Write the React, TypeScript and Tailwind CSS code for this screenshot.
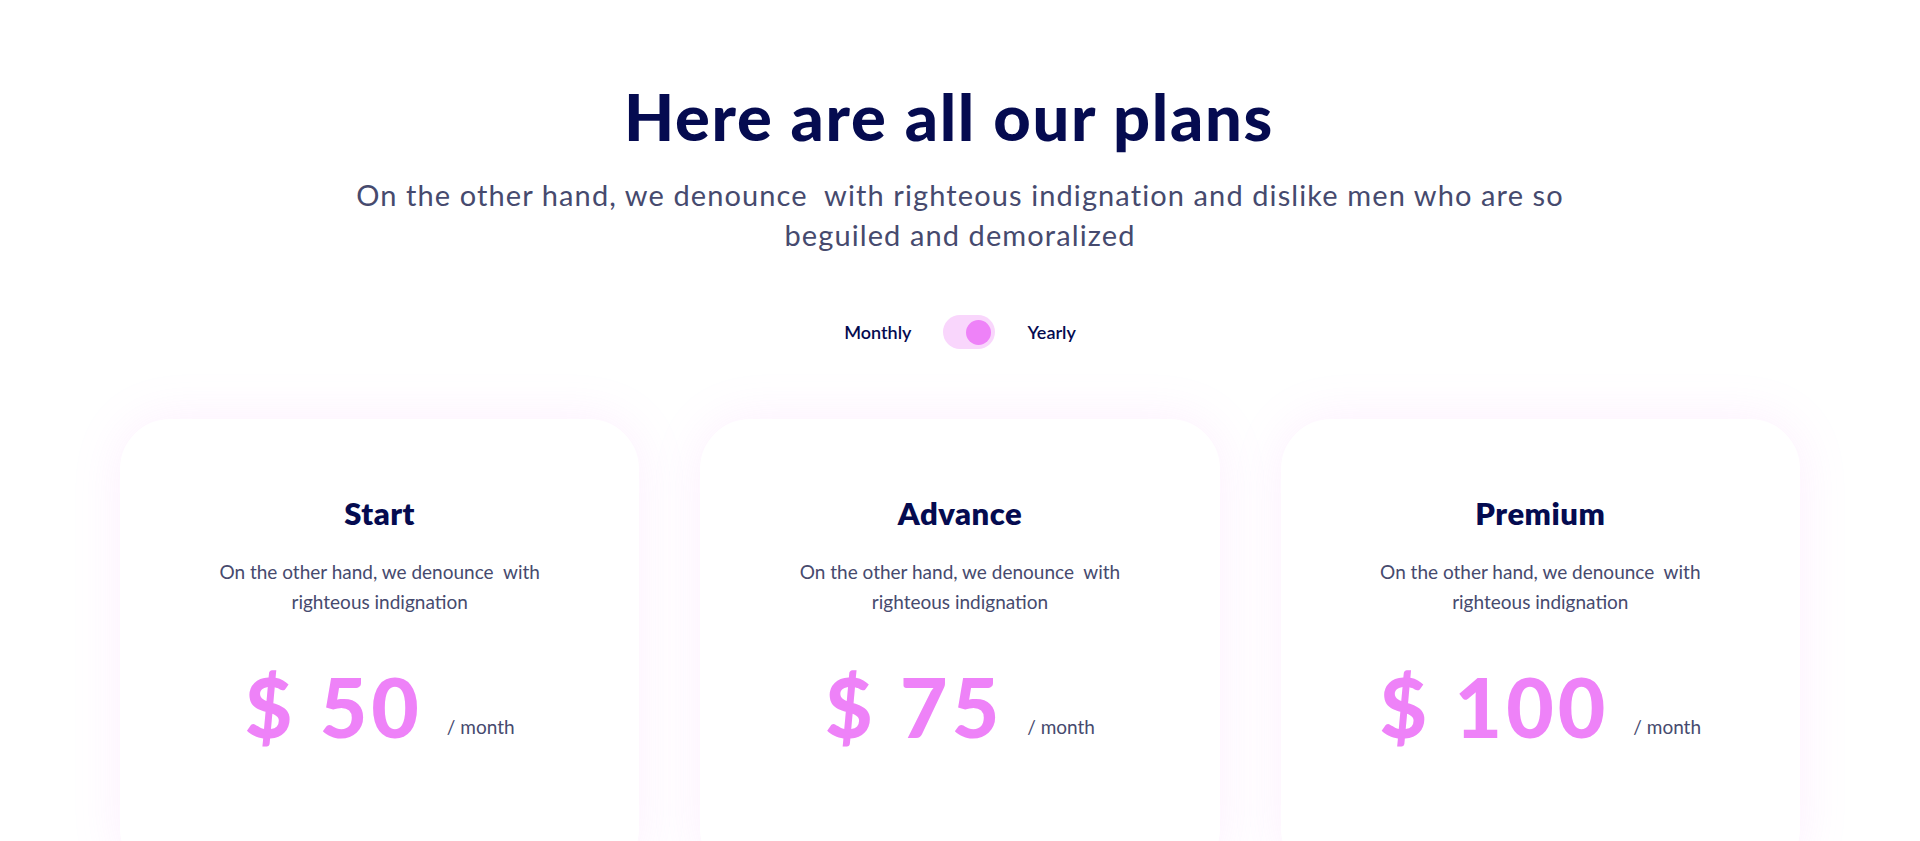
import React, { useState } from 'react';

const plans = [
  { name: 'Start', price: '$ 50' },
  { name: 'Advance', price: '$ 75' },
  { name: 'Premium', price: '$ 100' },
];

export default function App() {
  const [yearly, setYearly] = useState(true);

  return (
    <div className="min-h-screen bg-white font-['Lato','Noto_Sans',sans-serif] overflow-hidden">
      <div className="flex flex-col items-center pt-[78px]">
        <h1 className="pr-[22px] text-[65px] leading-[76px] font-black text-[#050b50] tracking-[1.7px]">
          Here are all our plans
        </h1>
        <p className="mt-[21px] max-w-[1230px] text-center text-[29px] leading-[40px] font-normal text-[#464a6e] tracking-[1.1px]">
          On the other hand, we denounce&nbsp; with righteous indignation and dislike men who are so beguiled and demoralized
        </p>

        <div className="mt-[60px] flex items-center">
          <span className="text-[18px] font-semibold text-[#050b50]">Monthly</span>
          <button
            onClick={() => setYearly(!yearly)}
            className={`mx-[32px] flex h-[34px] w-[52px] items-center rounded-full bg-[#f9d6fc] px-[4px] ${
              yearly ? 'justify-end' : 'justify-start'
            }`}
          >
            <span className="h-[25px] w-[25px] rounded-full bg-[#ee82f8]" />
          </button>
          <span className="text-[18px] font-semibold text-[#050b50]">Yearly</span>
        </div>
      </div>

      <div className="mx-[120px] mt-[70px] grid grid-cols-3 gap-[61px]">
        {plans.map((plan) => (
          <div
            key={plan.name}
            className="flex h-[460px] flex-col items-center rounded-[50px] bg-white pt-[74px] shadow-[0_0_50px_rgba(238,130,248,0.13)]"
          >
            <h2 className="text-[31px] leading-[40px] font-extrabold text-[#050b50] tracking-[0.5px]">{plan.name}</h2>
            <p className="mt-[24px] max-w-[360px] text-center text-[19px] leading-[30px] text-[#464a6e]">
              On the other hand, we denounce&nbsp; with righteous indignation
            </p>
            <div className="mt-[44px] flex items-end">
              <span className="text-[82px] leading-[90px] font-black text-[#ee82f8] tracking-[4px]">
                {plan.price}
              </span>
              <span className="mb-[10px] ml-[24px] text-[19px] text-[#464a6e]">/ month</span>
            </div>
          </div>
        ))}
      </div>
    </div>
  );
}
